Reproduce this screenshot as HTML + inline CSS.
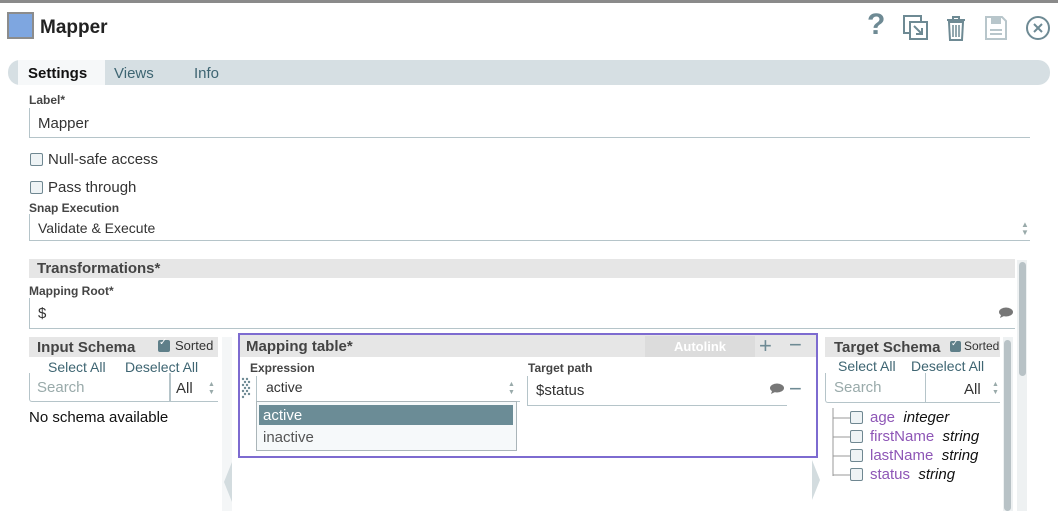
<!DOCTYPE html><html><head><style>
*{box-sizing:border-box;margin:0;padding:0}
body{width:1058px;height:511px;overflow:hidden;background:#fff;font-family:"Liberation Sans",sans-serif;color:#333;position:relative}
.a{position:absolute;white-space:nowrap}
.lbl{font-size:12px;font-weight:bold;color:#444}
.t{font-size:15px}
.cb{position:absolute;width:13px;height:13px;border:1px solid #6f8791;border-radius:2px;background:#eef3f5}
.hdr{position:absolute;background:#e6e6e6;font-weight:bold;font-size:15px;color:#444}
.lk{color:#3e6572;font-size:14px}
.ph{color:#9aa;font-size:15px}
.pu{color:#8e56b6}
.it{font-style:italic;color:#111}
</style></head><body>
<div class="a" style="left:0;top:0;width:1058px;height:3px;background:#8a8a8a"></div>
<div class="a" style="left:7px;top:12px;width:27px;height:27px;background:#7ea6e0;border:2px solid #8c8c8c"></div>
<div class="a" style="left:40px;top:17px;font-size:19px;font-weight:bold;color:#222">Mapper</div>
<div class="a" style="left:867px;top:8px;font-size:30px;font-weight:bold;color:#6e8a94">?</div>
<svg class="a" style="left:903px;top:15px" width="26" height="26"><rect x="1" y="1" width="17" height="17" fill="none" stroke="#6e8a94" stroke-width="2"/><rect x="7" y="7" width="17" height="17" fill="#fff" stroke="#6e8a94" stroke-width="2"/><path d="M11 11l8 8M19 13v6h-6" stroke="#6e8a94" stroke-width="2" fill="none"/></svg>
<svg class="a" style="left:945px;top:14px" width="22" height="28"><path d="M2 6h18M8 6V3h6v3M4 8h14l-1 18H5z" stroke="#6e8a94" stroke-width="2" fill="none"/><path d="M8 11v12M11 11v12M14 11v12" stroke="#6e8a94" stroke-width="1.5"/></svg>
<svg class="a" style="left:984px;top:15px" width="24" height="26"><path d="M2 2h16l4 4v18H2z" stroke="#b8c6cb" stroke-width="2" fill="none"/><rect x="7" y="3" width="10" height="6" fill="#b8c6cb"/><path d="M6 15h12M6 19h12" stroke="#b8c6cb" stroke-width="2"/></svg>
<svg class="a" style="left:1025px;top:15px" width="26" height="26"><circle cx="13" cy="13" r="11" fill="none" stroke="#6e8a94" stroke-width="2"/><path d="M9 9l8 8M17 9l-8 8" stroke="#6e8a94" stroke-width="2"/></svg>
<div class="a" style="left:8px;top:60px;width:1042px;height:25px;background:#d6dfe3;border-radius:12px"></div>
<div class="a" style="left:18px;top:60px;width:87px;height:25px;background:#f6f8f9"></div>
<div class="a" style="left:28px;top:65px;font-size:15px;font-weight:bold;color:#111">Settings</div>
<div class="a" style="left:114px;top:65px;font-size:15px;color:#3e6572">Views</div>
<div class="a" style="left:194px;top:65px;font-size:15px;color:#3e6572">Info</div>
<div class="a lbl" style="left:29px;top:93px">Label*</div>
<div class="a" style="left:29px;top:108px;width:1001px;height:30px;border-left:1px solid #b5c4c9;border-bottom:1px solid #b5c4c9"></div>
<div class="a t" style="left:38px;top:115px">Mapper</div>
<div class="cb" style="left:30px;top:153px"></div><div class="a t" style="left:48px;top:151px">Null-safe access</div>
<div class="cb" style="left:30px;top:181px"></div><div class="a t" style="left:48px;top:179px">Pass through</div>
<div class="a lbl" style="left:29px;top:201px">Snap Execution</div>
<div class="a" style="left:29px;top:214px;width:1001px;height:27px;border-left:1px solid #b5c4c9;border-bottom:1px solid #b5c4c9"></div>
<div class="a" style="left:38px;top:220px;font-size:14px">Validate &amp; Execute</div>
<div class="a" style="left:1021px;top:221px;font-size:8px;color:#9aa;line-height:8px">▲<br>▼</div>
<div class="hdr" style="left:29px;top:259px;width:986px;height:19px;padding:1px 8px">Transformations*</div>
<div class="a" style="left:1017px;top:260px;width:10px;height:251px;background:#eef1f2"></div>
<div class="a" style="left:1019px;top:262px;width:7px;height:114px;background:#b8c2c6;border-radius:4px"></div>
<div class="a lbl" style="left:29px;top:284px">Mapping Root*</div>
<div class="a" style="left:29px;top:298px;width:986px;height:31px;border-left:1px solid #b5c4c9;border-bottom:1px solid #b5c4c9"></div>
<div class="a t" style="left:38px;top:305px">$</div>
<svg class="a" style="left:998px;top:307px" width="16" height="12"><ellipse cx="8" cy="5" rx="7" ry="4.5" fill="#777"/><path d="M3 8l-1 3 4-2z" fill="#777"/></svg>
<div class="hdr" style="left:29px;top:337px;width:189px;height:20px;padding:2px 8px">Input Schema</div>
<div class="cb" style="left:158px;top:340px;background:#5f7f89;border-color:#5f7f89;width:12px;height:12px"></div>
<div class="a" style="left:159px;top:337px;color:#fff;font-size:10px">✓</div>
<div class="a" style="left:175px;top:338px;font-size:13px;color:#333">Sorted</div>
<div class="a lk" style="left:48px;top:359px">Select All</div>
<div class="a lk" style="left:125px;top:359px">Deselect All</div>
<div class="a" style="left:29px;top:373px;width:141px;height:29px;border:1px solid #b5c4c9;border-top:none;border-radius:0 0 0 3px"></div>
<div class="a ph" style="left:37px;top:379px">Search</div>
<div class="a" style="left:170px;top:373px;width:48px;height:29px;border-left:1px solid #b5c4c9;border-bottom:1px solid #b5c4c9"></div>
<div class="a t" style="left:176px;top:380px">All</div>
<div class="a" style="left:208px;top:381px;font-size:7px;color:#9aa;line-height:8px">▲<br>▼</div>
<div class="a t" style="left:29px;top:409px;color:#111">No schema available</div>
<div class="a" style="left:222px;top:337px;width:10px;height:174px;background:#f4f6f7"></div>
<svg class="a" style="left:223px;top:462px" width="10" height="40"><path d="M9 0L1 20l8 20z" fill="#d3dcdf"/></svg>
<div class="a" style="left:238px;top:333px;width:580px;height:125px;border:2px solid #7d6bd0"></div>
<div class="hdr" style="left:240px;top:335px;width:576px;height:22px;padding:3px 6px">Mapping table*</div>
<div class="a" style="left:645px;top:336px;width:110px;height:21px;background:#dcdcdc;color:#fff;font-weight:bold;font-size:13px;text-align:center;line-height:21px">Autolink</div>
<div class="a" style="left:759px;top:333px;font-size:22px;color:#6e8a94">+</div>
<div class="a" style="left:789px;top:332px;font-size:22px;color:#6e8a94">−</div>
<div class="a lbl" style="left:250px;top:361px">Expression</div>
<svg class="a" style="left:241px;top:377px" width="12" height="22"><g fill="#6e8a94"><circle cx="2" cy="2" r="1.2"/><circle cx="6" cy="2" r="1.2"/><circle cx="4" cy="5" r="1.2"/><circle cx="8" cy="5" r="1.2"/><circle cx="2" cy="8" r="1.2"/><circle cx="6" cy="8" r="1.2"/><circle cx="4" cy="11" r="1.2"/><circle cx="8" cy="11" r="1.2"/><circle cx="2" cy="14" r="1.2"/><circle cx="6" cy="14" r="1.2"/><circle cx="4" cy="17" r="1.2"/><circle cx="8" cy="17" r="1.2"/><circle cx="2" cy="20" r="1.2"/></g></svg>
<div class="a" style="left:256px;top:376px;width:264px;height:26px;border-left:1px solid #b5c4c9;border-bottom:1px solid #b5c4c9"></div>
<div class="a" style="left:266px;top:379px;font-size:14px">active</div>
<div class="a" style="left:508px;top:381px;font-size:7px;color:#9aa;line-height:8px">▲<br>▼</div>
<div class="a" style="left:256px;top:401px;width:261px;height:50px;border:1px solid #aab5b9;background:#f6f9fa"></div>
<div class="a" style="left:259px;top:405px;width:254px;height:20px;background:#6b8c96"></div>
<div class="a" style="left:263px;top:407px;font-size:15px;color:#fff">active</div>
<div class="a" style="left:263px;top:429px;font-size:15px;color:#555">inactive</div>
<div class="a lbl" style="left:528px;top:361px">Target path</div>
<div class="a" style="left:527px;top:376px;width:260px;height:30px;border-left:1px solid #b5c4c9;border-bottom:1px solid #b5c4c9"></div>
<div class="a t" style="left:536px;top:382px">$status</div>
<svg class="a" style="left:769px;top:383px" width="16" height="12"><ellipse cx="8" cy="5" rx="7" ry="4.5" fill="#777"/><path d="M3 8l-1 3 4-2z" fill="#777"/></svg>
<div class="a" style="left:789px;top:376px;font-size:22px;color:#6e8a94">−</div>
<svg class="a" style="left:811px;top:460px" width="10" height="40"><path d="M1 0l8 20-8 20z" fill="#d3dcdf"/></svg>
<div class="hdr" style="left:825px;top:337px;width:175px;height:20px;padding:2px 9px">Target Schema</div>
<div class="cb" style="left:950px;top:341px;background:#5f7f89;border-color:#5f7f89;width:11px;height:11px"></div>
<div class="a" style="left:951px;top:338px;color:#fff;font-size:9px">✓</div>
<div class="a" style="left:964px;top:339px;font-size:12px;color:#333">Sorted</div>
<div class="a" style="left:1003px;top:337px;width:10px;height:174px;background:#eef1f2"></div>
<div class="a" style="left:1004px;top:340px;width:7px;height:171px;background:#b8c2c6;border-radius:4px"></div>
<div class="a lk" style="left:838px;top:358px">Select All</div>
<div class="a lk" style="left:911px;top:358px">Deselect All</div>
<div class="a" style="left:825px;top:373px;width:100px;height:30px;border-left:1px solid #b5c4c9;border-bottom:1px solid #b5c4c9;border-radius:0 0 0 3px"></div>
<div class="a ph" style="left:834px;top:379px">Search</div>
<div class="a" style="left:925px;top:373px;width:75px;height:30px;border-left:1px solid #b5c4c9;border-bottom:1px solid #b5c4c9"></div>
<div class="a t" style="left:964px;top:381px">All</div>
<div class="a" style="left:992px;top:381px;font-size:7px;color:#9aa;line-height:8px">▲<br>▼</div>
<svg class="a" style="left:830px;top:408px" width="22" height="72"><path d="M3 0v68M3 10h17M3 29h17M3 48h17M3 67h17" stroke="#999" fill="none"/></svg>
<div class="cb" style="left:850px;top:411px"></div><div class="a t" style="left:870px;top:409px"><span class="pu">age</span>&nbsp; <span class="it">integer</span></div>
<div class="cb" style="left:850px;top:430px"></div><div class="a t" style="left:870px;top:428px"><span class="pu">firstName</span>&nbsp; <span class="it">string</span></div>
<div class="cb" style="left:850px;top:449px"></div><div class="a t" style="left:870px;top:447px"><span class="pu">lastName</span>&nbsp; <span class="it">string</span></div>
<div class="cb" style="left:850px;top:468px"></div><div class="a t" style="left:870px;top:466px"><span class="pu">status</span>&nbsp; <span class="it">string</span></div>
</body></html>
